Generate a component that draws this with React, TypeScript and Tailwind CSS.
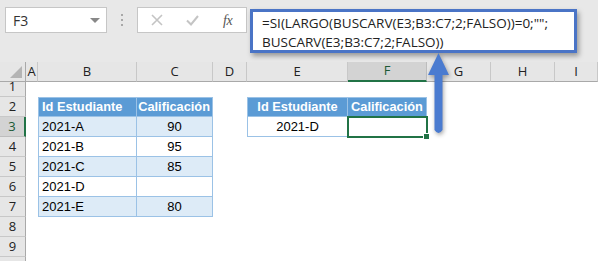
import React from 'react';

const cols = ['A', 'B', 'C', 'D', 'E', 'F', 'G', 'H', 'I'];

const cellFont = { fontFamily: '"Liberation Sans", Arial, sans-serif' };

const students = [
    { id: '2021-A', grade: '90' },
    { id: '2021-B', grade: '95' },
    { id: '2021-C', grade: '85' },
    { id: '2021-D', grade: '' },
    { id: '2021-E', grade: '80' },
];

const App: React.FC = () => {
    return (
        <div className="w-[598px] h-[261px] overflow-hidden bg-white relative font-['Liberation_Sans',Arial,sans-serif] text-[#222]">
            {/* formula bar area */}
            <div className="h-[62px] bg-[#e8e8e8] flex items-start">
                <div className="ml-[5px] mt-[7px] w-[102px] h-[26px] bg-white border border-[#c6c6c6] flex items-center justify-between pl-[7px] pr-[6px]">
                    <span className="text-[14px] text-[#333] font-['Open_Sans',sans-serif]">F3</span>
                    <span className="w-0 h-0 border-l-[5px] border-r-[5px] border-t-[5px] border-l-transparent border-r-transparent border-t-[#888]" />
                </div>
                <div className="ml-[14px] mt-[14px] flex flex-col gap-[3px]">
                    <span className="w-[2px] h-[2px] bg-[#a8a8a8]" />
                    <span className="w-[2px] h-[2px] bg-[#a8a8a8]" />
                    <span className="w-[2px] h-[2px] bg-[#a8a8a8]" />
                </div>
                <div className="ml-[14px] mt-[7px] w-[110px] h-[26px] bg-white border border-[#c6c6c6] flex items-center">
                    <svg className="ml-[13px]" width="12" height="12" viewBox="0 0 12 12">
                        <path d="M1 1 L11 11 M11 1 L1 11" stroke="#c4c4c4" strokeWidth="1.6" fill="none" />
                    </svg>
                    <svg className="ml-[23px]" width="13" height="11" viewBox="0 0 13 11">
                        <path d="M1 5.5 L5 9.5 L12 1" stroke="#c4c4c4" strokeWidth="2" fill="none" />
                    </svg>
                    <span className="ml-[24px] text-[14px] italic text-[#555] font-['Liberation_Serif',serif] tracking-[-0.5px]">fx</span>
                </div>
                <div className="ml-[3px] mt-[9px] w-[327px] h-[44px] bg-white border-[3px] border-[#4a74c6] shadow-[2px_3px_5px_rgba(0,0,0,0.35)] pl-[9px] pt-[2px] text-[13.5px] leading-[19px] text-[#222] font-['Open_Sans',sans-serif] whitespace-nowrap">
                    <div>=SI(LARGO(BUSCARV(E3;B3:C7;2;FALSO))=0;"";</div>
                    <div>BUSCARV(E3;B3:C7;2;FALSO))</div>
                </div>
            </div>

            {/* sheet */}
            <div className="grid grid-cols-[26px_12px_99px_76px_34px_101px_79px_64px_64px_43px] grid-rows-[20px_15px_20px_20px_20px_20px_20px_20px_20px_20px_20px] text-[13px] whitespace-nowrap">
                {/* corner */}
                <div className="relative bg-[#e6e6e6] border-r border-b border-[#a9a9a9]">
                    <span className="absolute right-[3px] bottom-[3px] w-0 h-0 border-l-[12px] border-b-[12px] border-l-transparent border-b-[#b4b4b4]" />
                </div>
                {cols.map(c => (
                    <div
                        key={c}
                        className={`flex items-center justify-center border-r font-['Open_Sans',sans-serif] text-[13px] ${c === 'F' ? 'bg-[#d3d3d3] border-[#bdbdbd] border-b-2 border-b-[#217346] text-[#1c5a36]' : 'bg-[#e6e6e6] border-[#c8c8c8] border-b border-b-[#a9a9a9] text-[#222]'}`}
                    >
                        {c}
                    </div>
                ))}

                {Array.from({ length: 10 }, (_, i) => i + 1).map(r => (
                    <div
                        key={r}
                        className={`col-start-1 flex items-center justify-center border-b font-['Open_Sans',sans-serif] text-[13px] ${r === 3 ? 'bg-[#d3d3d3] border-[#bdbdbd] border-r-2 border-r-[#217346] text-[#1c5a36]' : 'bg-[#e6e6e6] border-[#c8c8c8] border-r border-r-[#a9a9a9] text-[#222]'}`}
                        style={{ gridRow: r + 1 }}
                    >
                        {r === 1 ? <span className="-mt-[4px]">1</span> : r < 10 ? r : ''}
                    </div>
                ))}

                {/* table 1 */}
                <div className="col-start-3 row-start-3 bg-[#5b9bd5] text-white font-bold border-t border-l border-r border-b border-[#9bc2e6] flex items-center pl-[3px] text-[12.8px]" style={cellFont}>
                    Id Estudiante
                </div>
                <div className="col-start-4 row-start-3 bg-[#5b9bd5] text-white font-bold border-t border-r border-b border-[#9bc2e6] flex items-center justify-end pr-[2px] text-[12.8px]" style={cellFont}>
                    Calificación
                </div>
                {students.map((s, i) => {
                    const bg = i % 2 === 0 ? 'bg-[#ddebf7]' : 'bg-white';
                    return (
                        <React.Fragment key={s.id}>
                            <div className={`col-start-3 ${bg} border-l border-r border-b border-[#9bc2e6] flex items-center pl-[3px] text-[13px] text-black`} style={{ ...cellFont, gridRow: i + 4 }}>
                                {s.id}
                            </div>
                            <div className={`col-start-4 ${bg} border-r border-b border-[#9bc2e6] flex items-center justify-center text-[13px] text-black`} style={{ ...cellFont, gridRow: i + 4 }}>
                                {s.grade}
                            </div>
                        </React.Fragment>
                    );
                })}

                {/* table 2 */}
                <div className="col-start-6 row-start-3 bg-[#5b9bd5] text-white font-bold border-t border-l border-r border-b border-[#9bc2e6] flex items-center justify-center text-[12.8px]" style={cellFont}>
                    Id Estudiante
                </div>
                <div className="col-start-7 row-start-3 bg-[#5b9bd5] text-white font-bold border-t border-r border-b border-[#9bc2e6] flex items-center justify-center text-[12.8px]" style={cellFont}>
                    Calificación
                </div>
                <div className="col-start-6 row-start-4 bg-white border-l border-r border-b border-[#9bc2e6] flex items-center justify-center text-[13px] text-black" style={cellFont}>
                    2021-D
                </div>
                <div className="col-start-7 row-start-4 relative bg-white">
                    <div className="absolute -left-[1px] -top-[1px] -right-[1px] -bottom-[1px] border-2 border-[#217346]" />
                    <div className="absolute -right-[3px] -bottom-[3px] w-[5px] h-[5px] bg-[#217346] border border-white box-content" />
                </div>
            </div>

            {/* arrow */}
            <svg className="absolute left-[424px] top-[50px]" width="30" height="92" viewBox="0 0 30 92" style={{ filter: 'drop-shadow(1px 2px 2px rgba(0,0,0,0.35))' }}>
                <path d="M14.5 3 L25 25 L18.5 25 L18.5 80 Q14.5 86 10.5 80 L10.5 25 L4 25 Z" fill="#4a7bd0" />
            </svg>
        </div>
    );
};

export default App;
